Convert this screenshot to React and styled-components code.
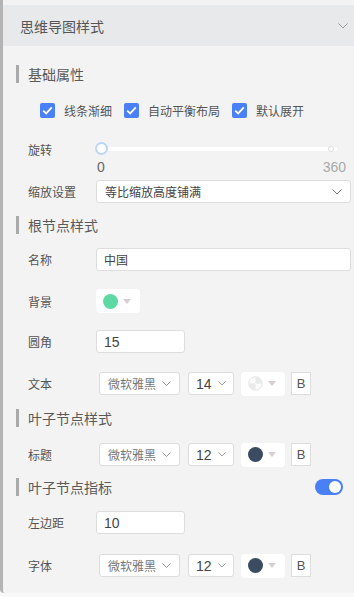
import styled, { createGlobalStyle } from "styled-components"

const GlobalStyle = createGlobalStyle`
  html, body {
    margin: 0;
    padding: 0;
    background: #f8f8f8;
    font-family: "Noto Sans CJK SC", "Noto Sans", sans-serif;
  }
  * { box-sizing: border-box; }
`

const Chevron = ({ size = 10, color = "#888" }) => (
  <svg width={size} height={size * 0.6} viewBox="0 0 10 6" fill="none">
    <path d="M0.5 0.5 L5 5 L9.5 0.5" stroke={color} strokeWidth="1" />
  </svg>
)

const Check = () => (
  <svg width="11" height="9" viewBox="0 0 11 9" fill="none">
    <path d="M1.2 4.6 L4.2 7.4 L9.8 1.4" stroke="#fff" strokeWidth="1.8" />
  </svg>
)

export default function App() {
  return (
    <>
      <GlobalStyle />
      <Panel>
        <Header>
          <span>思维导图样式</span>
          <Chevron size={10} color="#999" />
        </Header>

        <Content>
          <Section $mt={19}>基础属性</Section>
          <CheckRow $mt={17}>
            <CheckItem><Box><Check /></Box>线条渐细</CheckItem>
            <CheckItem><Box><Check /></Box>自动平衡布局</CheckItem>
            <CheckItem><Box><Check /></Box>默认展开</CheckItem>
          </CheckRow>

          <Row $mt={21} $h={16}>
            <Label>旋转</Label>
            <Slider>
              <Handle />
              <EndDot />
            </Slider>
          </Row>
          <SliderValues>
            <span>0</span>
            <span className="max">360</span>
          </SliderValues>

          <Row $mt={6}>
            <Label>缩放设置</Label>
            <Select $w={255} $pad={8}>
              <span>等比缩放高度铺满</span>
              <Chevron size={10} color="#777" />
            </Select>
          </Row>

          <Section $mt={13}>根节点样式</Section>
          <Row $mt={14}>
            <Label>名称</Label>
            <Input $w={255} $fs={12}>中国</Input>
          </Row>
          <Row $mt={18} $h={24}>
            <Label>背景</Label>
            <ColorPicker>
              <Dot $color="#5fd9a4" />
              <Caret />
            </ColorPicker>
          </Row>
          <Row $mt={17}>
            <Label>圆角</Label>
            <Input $w={89}>15</Input>
          </Row>
          <FontRow $mt={19} label="文本" size="14" color={null} />

          <Section $mt={14}>叶子节点样式</Section>
          <FontRow $mt={16} label="标题" size="12" color="#3a4b62" />

          <SectionRow $mt={12}>
            <Section $mt={0}>叶子节点指标</Section>
            <Toggle />
          </SectionRow>
          <Row $mt={15}>
            <Label>左边距</Label>
            <Input $w={89}>10</Input>
          </Row>
          <FontRow $mt={20} label="字体" size="12" color="#3a4b62" />
        </Content>
      </Panel>
    </>
  )
}

function FontRow({ $mt, label, size, color }) {
  return (
    <Row $mt={$mt}>
      <Label $w={71}>{label}</Label>
      <Select $w={81} $pad={8} $color="#777">
        <span>微软雅黑</span>
        <Chevron size={9} color="#888" />
      </Select>
      <Select $w={46} $pad={7} $ml={8} $fs={14}>
        <span>{size}</span>
        <Chevron size={8} color="#888" />
      </Select>
      <ColorPicker $ml={7}>
        {color ? (
          <Dot $color={color} />
        ) : (
          <svg width="15" height="15" viewBox="0 0 16 16">
            <circle cx="8" cy="8" r="7.2" fill="#fbfbfb" stroke="#e2e2e2" />
            <path d="M8 8 L8 0.8 A7.2 7.2 0 0 1 15.2 8 Z" fill="#e9e9e9" />
            <path d="M8 8 L8 15.2 A7.2 7.2 0 0 1 0.8 8 Z" fill="#e9e9e9" />
          </svg>
        )}
        <Caret />
      </ColorPicker>
      <BoldBox>B</BoldBox>
    </Row>
  )
}

const Panel = styled.div`
  width: 354px;
  background: #f3f3f3;
  border-left: 3px solid #b4b4b4;
  border-bottom-left-radius: 4px;
  padding-top: 5px;
  padding-bottom: 16px;
`

const Header = styled.div`
  height: 41px;
  background: #e8e9eb;
  display: flex;
  align-items: center;
  justify-content: space-between;
  padding: 0 6px 0 17px;
  font-size: 14px;
  color: #555;
`

const Content = styled.div`
  display: flex;
  flex-direction: column;
  padding-left: 13px;
`

const Section = styled.div`
  margin-top: ${(p) => p.$mt}px;
  height: 18px;
  display: flex;
  align-items: center;
  border-left: 3px solid #a9a9a9;
  padding-left: 9px;
  font-size: 14px;
  color: #5a5a5a;
`

const SectionRow = styled.div`
  margin-top: ${(p) => p.$mt}px;
  display: flex;
  align-items: center;
  justify-content: space-between;
  padding-right: 11px;
`

const CheckRow = styled.div`
  margin-top: ${(p) => p.$mt}px;
  height: 20px;
  display: flex;
  align-items: center;
  gap: 12px;
  padding-left: 24px;
`

const CheckItem = styled.label`
  display: flex;
  align-items: center;
  gap: 9px;
  font-size: 12px;
  color: #555;
`

const Box = styled.span`
  width: 15px;
  height: 15px;
  border-radius: 2px;
  background: #4a80f5;
  display: flex;
  align-items: center;
  justify-content: center;
`

const Row = styled.div`
  margin-top: ${(p) => p.$mt}px;
  height: ${(p) => p.$h || 23}px;
  display: flex;
  align-items: center;
  padding-left: 12px;
`

const Label = styled.span`
  width: ${(p) => p.$w || 68}px;
  flex-shrink: 0;
  font-size: 12px;
  color: #555;
`

const Slider = styled.div`
  position: relative;
  width: 241px;
  height: 4px;
  background: #fff;
  border-radius: 2px;
`

const Handle = styled.span`
  position: absolute;
  left: -1px;
  top: -5px;
  width: 13px;
  height: 13px;
  border-radius: 50%;
  background: #fff;
  border: 2px solid #bcd5f8;
`

const EndDot = styled.span`
  position: absolute;
  right: 3px;
  top: -1px;
  width: 6px;
  height: 6px;
  border-radius: 50%;
  background: #fff;
  border: 1px solid #ddd;
`

const SliderValues = styled.div`
  margin-top: 3px;
  height: 14px;
  display: flex;
  justify-content: space-between;
  align-items: center;
  padding-left: 81px;
  padding-right: 8px;
  font-family: "Liberation Sans", Arial, sans-serif;
  font-size: 14px;
  color: #666;
  .max { color: #aaa; }
`

const Select = styled.div`
  width: ${(p) => p.$w}px;
  height: 23px;
  margin-left: ${(p) => p.$ml || 0}px;
  display: flex;
  align-items: center;
  justify-content: space-between;
  padding: 0 ${(p) => p.$pad}px;
  background: #fff;
  border: 1px solid #ddd;
  border-radius: 3px;
  font-size: ${(p) => p.$fs || 12}px;
  color: ${(p) => p.$color || "#444"};
  span {
    font-family: ${(p) => (p.$fs ? '"Liberation Sans", Arial, sans-serif' : "inherit")};
  }
`

const Input = styled.div`
  width: ${(p) => p.$w}px;
  height: 23px;
  display: flex;
  align-items: center;
  padding: 0 7px;
  background: #fff;
  border: 1px solid #ddd;
  border-radius: 3px;
  font-size: ${(p) => p.$fs || 14}px;
  color: #444;
  font-family: ${(p) =>
    p.$fs ? "inherit" : '"Liberation Sans", Arial, sans-serif'};
`

const ColorPicker = styled.div`
  width: 44px;
  height: 24px;
  margin-left: ${(p) => p.$ml || 0}px;
  display: flex;
  align-items: center;
  gap: 5px;
  padding-left: 7px;
  background: #fff;
  border-radius: 4px;
`

const Dot = styled.span`
  width: 15px;
  height: 15px;
  border-radius: 50%;
  background: ${(p) => p.$color};
`

const Caret = styled.span`
  width: 0;
  height: 0;
  border-left: 4px solid transparent;
  border-right: 4px solid transparent;
  border-top: 5px solid #d8cfd2;
`

const BoldBox = styled.div`
  width: 20px;
  height: 23px;
  margin-left: 6px;
  display: flex;
  align-items: center;
  justify-content: center;
  background: #fff;
  border: 1px solid #ddd;
  font-family: "Liberation Sans", Arial, sans-serif;
  font-size: 13px;
  color: #555;
`

const Toggle = styled.span`
  position: relative;
  width: 28px;
  height: 16px;
  border-radius: 8px;
  background: #4a80f5;
  &::after {
    content: "";
    position: absolute;
    right: 2px;
    top: 2px;
    width: 12px;
    height: 12px;
    border-radius: 50%;
    background: #fff;
  }
`
